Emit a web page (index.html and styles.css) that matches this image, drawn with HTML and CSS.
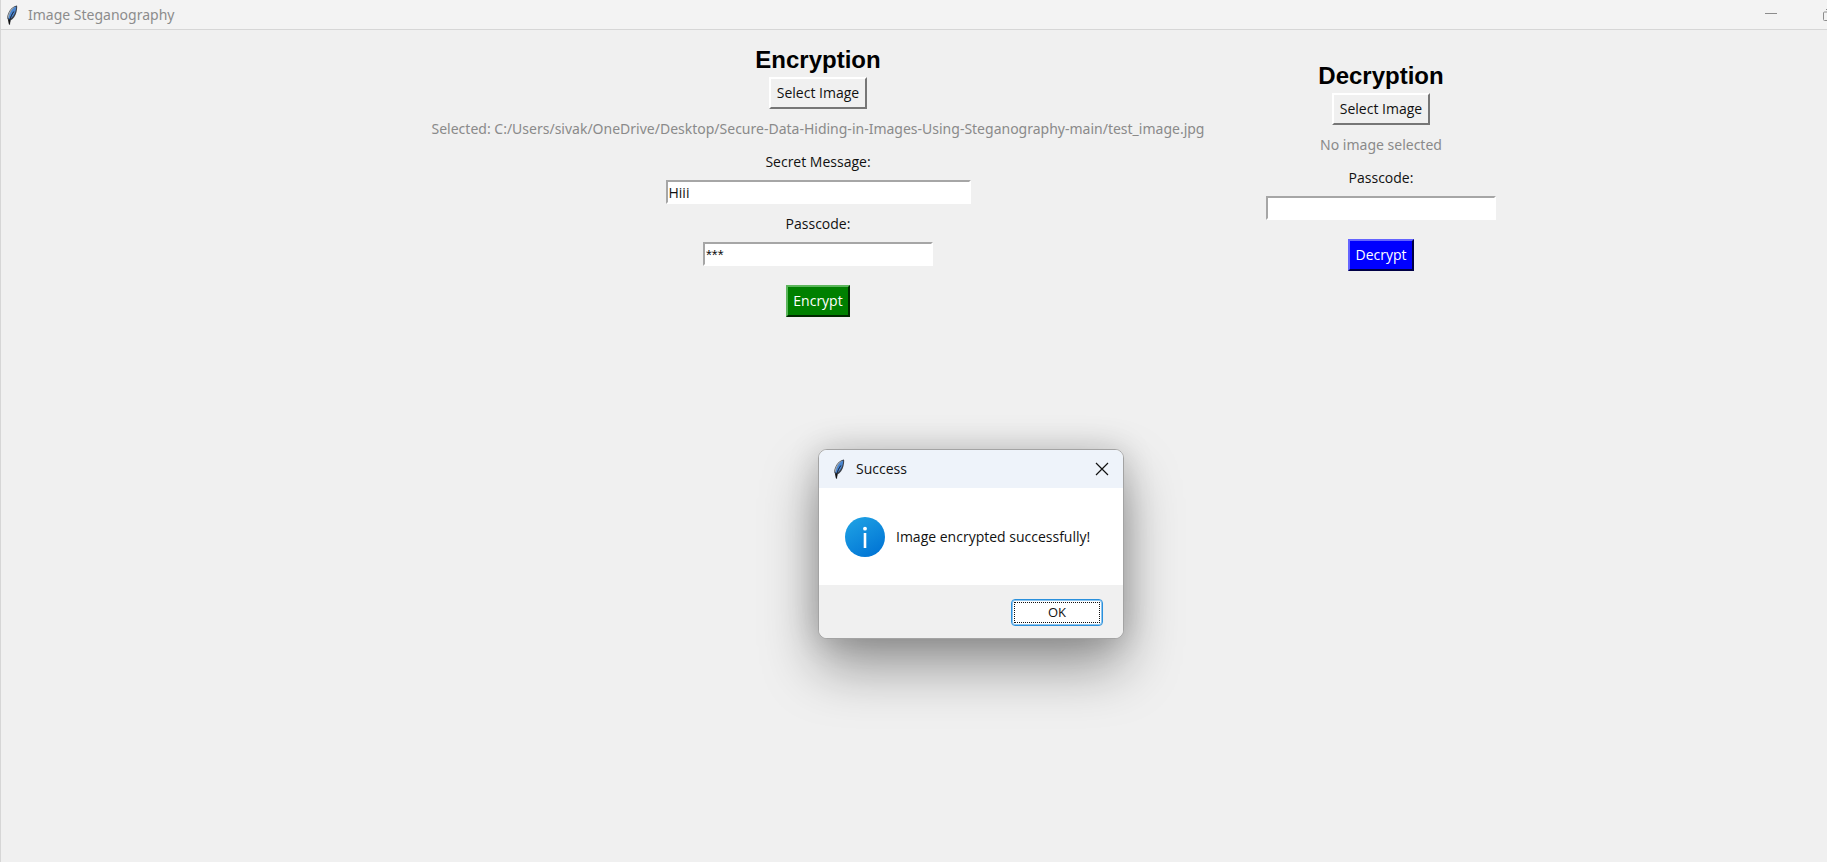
FILE: index.html
```html
<!DOCTYPE html>
<html lang="en">
<head>
<meta charset="utf-8">
<title>Image Steganography</title>
<link rel="stylesheet" href="styles.css">
</head>
<body>
<svg class="defs" width="0" height="0" aria-hidden="true">
  <symbol id="feather" viewBox="0 0 12 20">
    <path d="M11 .6C8.600 .8 5.800 2.600 3.700 5.600 1.900 8.400 1 11.500 1.400 13.800L2.600 15.600 3 19.400 4.100 19.400 4.200 15.800C7.300 14 9.600 10.800 10.500 7 11.100 4.400 11.400 2 11 .6Z" fill="#3a3f48"/>
    <path d="M10.200 1.500C8 2 6 3.700 4.400 6.100 2.900 8.600 2.200 11 2.300 13.200L3.600 14.200C6.300 12.600 8.500 9.800 9.400 6.500 10 4.500 10.300 2.800 10.200 1.500Z" fill="#4a86d0"/>
    <path d="M9.300 2C7.300 3 5.300 5.200 4.100 8 3.300 10 2.800 11.800 2.900 13 L1.900 12.400C1.800 10.200 2.700 7.800 4.200 5.500 5.700 3.400 7.600 2.100 9.300 2Z" fill="#a3a9ad"/>
    <path d="M7.800 6.500C6.200 8.800 4.800 11.500 3.500 15.500" fill="none" stroke="#111a2a" stroke-width="1"/>
    <path d="M2 14.500 4.600 15.600 3.600 19.500 3 19.500Z" fill="#111"/>
  </symbol>
</svg>
<div class="window">
  <header class="titlebar">
    <svg class="feather" aria-hidden="true"><use href="#feather"/></svg>
    <h1 class="titlebar-name">Image Steganography</h1>
    <button class="caption-button minimize" type="button" aria-label="Minimize">
      <svg width="12" height="12" viewBox="0 0 12 12"><path d="M0 4.500H12" stroke="#8c8c8c" fill="none"/></svg>
    </button>
    <button class="caption-button" type="button" aria-label="Restore">
      <svg width="12" height="12" viewBox="0 0 12 12"><path d="M.5 4Q.5 3 1.500 3H8Q9 3 9 4V10.500Q9 11.500 8 11.500H1.500Q.5 11.500 .5 10.500ZM3 .5H9.500Q11.500 .5 11.500 2.500V9" stroke="#8c8c8c" fill="none"/></svg>
    </button>
  </header>
  <main class="content">
    <form class="panel panel-encrypt">
      <h2 class="heading">Encryption</h2>
      <button class="push" type="button">Select Image</button>
      <p class="status">Selected: C:/Users/sivak/OneDrive/Desktop/Secure-Data-Hiding-in-Images-Using-Steganography-main/test_image.jpg</p>
      <label class="caption" for="message">Secret Message:</label>
      <input class="entry entry-wide" id="message" type="text" value="Hiii">
      <label class="caption" for="encrypt-code">Passcode:</label>
      <input class="entry entry-code" id="encrypt-code" type="text" value="***">
      <button class="push action green" type="button">Encrypt</button>
    </form>
    <form class="panel panel-decrypt">
      <h2 class="heading">Decryption</h2>
      <button class="push" type="button">Select Image</button>
      <p class="status">No image selected</p>
      <label class="caption" for="decrypt-code">Passcode:</label>
      <input class="entry entry-code" id="decrypt-code" type="text">
      <button class="push action blue" type="button">Decrypt</button>
    </form>
  </main>
  <section class="dialog" role="dialog" aria-labelledby="dialog-title">
    <header class="dialog-title">
      <svg class="feather" aria-hidden="true"><use href="#feather"/></svg>
      <h2 class="dialog-name" id="dialog-title">Success</h2>
      <button class="close" type="button" aria-label="Close">
        <svg width="14" height="14" viewBox="0 0 14 14"><path d="M1 1 13 13M13 1 1 13" stroke="#111" stroke-width="1.200" fill="none"/></svg>
      </button>
    </header>
    <div class="dialog-body">
      <svg class="info" width="40" height="40" viewBox="0 0 40 40" aria-hidden="true">
        <defs><linearGradient id="blue" x1="0.200" y1="0" x2="0.800" y2="1"><stop offset="0" stop-color="#1ea1e4"/><stop offset="1" stop-color="#0073d4"/></linearGradient></defs>
        <circle cx="20" cy="20" r="20" fill="url(#blue)"/>
        <circle cx="20" cy="11.700" r="1.900" fill="#fff"/>
        <path d="M20 16V31" stroke="#fff" stroke-width="2.600"/>
      </svg>
      <p class="message">Image encrypted successfully!</p>
    </div>
    <footer class="dialog-footer">
      <button class="ok" type="button"><span class="ok-focus">OK</span></button>
    </footer>
  </section>
</div>
</body>
</html>
```
FILE: styles.css
```css
* { box-sizing: border-box; }

body {
  margin: 0;
  background: #f0f0f0;
  color: #111;
  font-family: "Open Sans", "Noto Sans", sans-serif;
  font-size: 14px;
  line-height: 20px;
}

h1, h2, p { margin: 0; }
button, input { font: inherit; color: inherit; }

.defs { position: absolute; }

.window {
  position: relative;
  min-height: 100vh;
  overflow: hidden;
  border-left: 1px solid #d6d6d6;
}

.titlebar {
  display: flex;
  align-items: center;
  height: 30px;
  padding-left: 5px;
  background: #f3f3f3;
  border-bottom: 1px solid #d6d6d6;
  margin-right: -8px;
}

.feather { width: 12px; height: 20px; }

.titlebar-name {
  flex: 1;
  margin-left: 10px;
  color: #8c8c8c;
  font: 400 14px/20px "Noto Sans", sans-serif;
}

.caption-button {
  display: flex;
  padding: 0;
  border: 0;
  background: none;
}

.minimize { margin-right: 46px; }

.content {
  display: flex;
  justify-content: center;
  align-items: flex-start;
  gap: 55px;
  padding: 16px 0 0 93px;
}

.panel {
  display: flex;
  flex-direction: column;
  align-items: center;
}

.panel-encrypt { min-width: 786px; }
.panel-decrypt { margin-top: 16px; }

.heading {
  color: #000;
  font: bold 24px/28px "Liberation Sans", Arial, sans-serif;
  margin-bottom: 3px;
}

.push {
  height: 32px;
  padding: 0 6px;
  background: #f0f0f0;
  border: 2px solid;
  border-color: #fff #767676 #767676 #fff;
}

.status {
  margin-top: 10px;
  color: #8a8a8a;
  font-family: "Noto Sans", sans-serif;
}

.caption { margin-top: 13px; }

.entry {
  width: 230px;
  height: 24px;
  margin-top: 8px;
  padding: 0 1px;
  background: #fff;
  border: 2px solid;
  border-color: #a6a6a6 #fff #fff #a6a6a6;
  outline: 0;
}

.entry-wide { width: 305px; }
.entry-code { font-family: "Liberation Sans", Arial, sans-serif; font-size: 15px; }
.entry + .caption { margin-top: 10px; }
.action { margin-top: 19px; padding: 0 5px; color: #fff; }

.green { background: #008000; border-color: #5cb65c #002800 #002800 #5cb65c; }
.blue { background: #00f; border-color: #6464ff #000046 #000046 #6464ff; }

.dialog {
  position: absolute;
  left: 817px;
  top: 449px;
  width: 306px;
  overflow: hidden;
  background: #fff;
  border: 1px solid #a3a3a3;
  border-radius: 9px;
  box-shadow: 0 28px 56px rgba(0, 0, 0, .38), 0 0 32px rgba(0, 0, 0, .16);
}

.dialog-title {
  display: flex;
  align-items: center;
  height: 38px;
  padding: 0 14px;
  background: #eef3fa;
}

.dialog-name {
  flex: 1;
  margin-left: 11px;
  font-size: 14px;
  font-weight: 400;
}

.close { display: flex; padding: 0; border: 0; background: none; }

.dialog-body {
  display: flex;
  align-items: center;
  gap: 11px;
  height: 97px;
  padding-left: 26px;
}

.dialog-footer {
  display: flex;
  justify-content: flex-end;
  padding: 14px 20px 12px;
  background: #f0f0f0;
}

.ok {
  width: 92px;
  height: 27px;
  padding: 2px;
  background: #fff;
  border: 1px solid #2a90dc;
  border-radius: 4px;
  box-shadow: inset 0 0 0 1px #8cc4ee;
  font-size: 13px;
}

.ok-focus { display: block; border: 1px dotted #111; line-height: 19px; }
```
